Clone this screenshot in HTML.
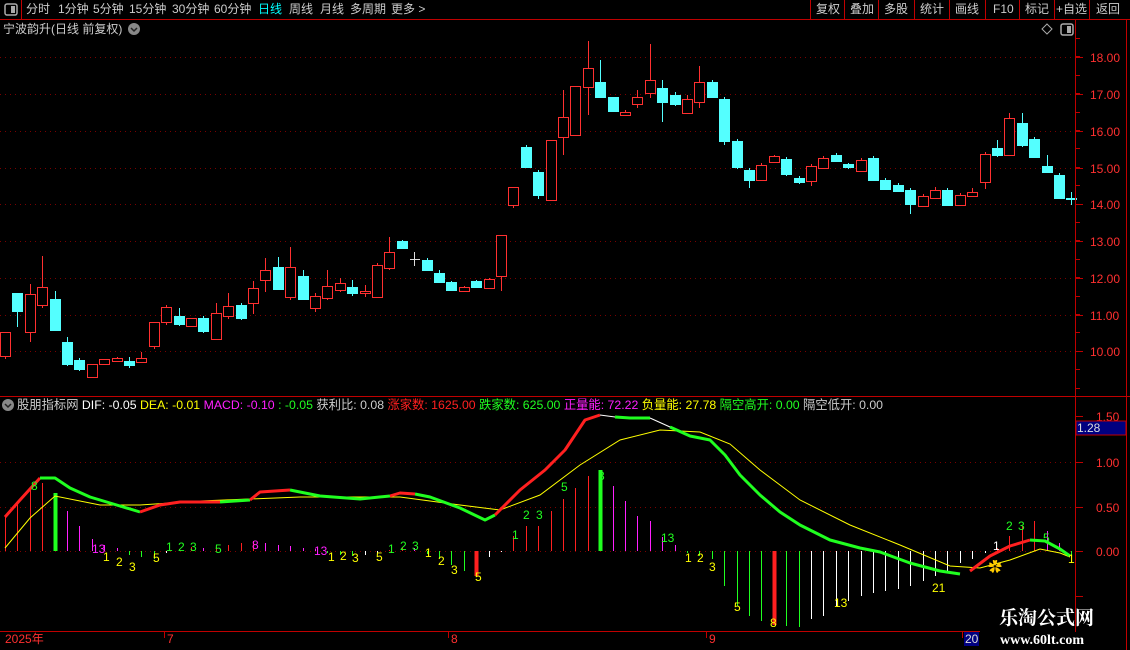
<!DOCTYPE html>
<html><head><meta charset="utf-8">
<style>
html,body{margin:0;padding:0;background:#000;width:1130px;height:650px;overflow:hidden}
body{font-family:"Liberation Sans","Noto Sans CJK SC",sans-serif;font-size:12px;color:#ccc;position:relative}
.t{position:absolute;white-space:nowrap;line-height:14px}
svg{position:absolute;left:0;top:0}
</style></head><body>
<svg id="s" width="1130" height="650" xmlns="http://www.w3.org/2000/svg" font-family="Liberation Sans, Noto Sans CJK SC, sans-serif" font-size="12">
<g id="grid"></g>
<g id="cd"></g>
<g id="hist"></g>
<polyline fill="none" stroke="#ffff00" stroke-width="1" points="5,548 30,518 55,496 100,505 140,505 200,501 300,497 400,497 460,505 500,510 540,495 580,465 620,440 660,430 700,432 730,444 760,470 800,500 850,525 900,545 950,566 980,568 1010,560 1040,549 1060,553 1070,557"/>
<g fill="none" stroke-width="3" stroke-linejoin="round">
<polyline stroke="#ff2020" points="5,517 20,500 40,478"/>
<polyline stroke="#20ff20" points="40,478 55,478 70,488 90,497 110,503 140,512"/>
<polyline stroke="#ff2020" points="140,512 160,505 180,502 220,502"/>
<polyline stroke="#20ff20" points="220,502 250,500"/>
<polyline stroke="#ff2020" points="250,500 260,492 290,490"/>
<polyline stroke="#20ff20" points="290,490 320,496 360,499 390,496"/>
<polyline stroke="#ff2020" points="390,496 400,493 415,494"/>
<polyline stroke="#20ff20" points="415,494 430,497 460,508 485,520 495,515"/>
<polyline stroke="#ff2020" points="495,515 500,510 520,490 545,470 565,450 585,420 600,415"/>
<polyline stroke="#20ff20" points="615,417 630,418 650,418"/>
<polyline stroke="#20ff20" points="670,427 690,436 710,440 725,455 740,475 760,495 780,512 800,525 830,540 860,548 880,552 910,563 940,571 960,574"/>
<polyline stroke="#ff2020" points="970,571 990,556 1010,546 1030,540"/>
<polyline stroke="#20ff20" points="1030,540 1045,541 1060,549 1070,556"/>
</g>
<polyline fill="none" stroke="#fff" stroke-width="1" points="600,415 615,417"/>
<polyline fill="none" stroke="#fff" stroke-width="1" points="650,418 670,427"/>
<g font-size="12">
<text x="31" y="490" fill="#20ff20">8</text>
<text x="92" y="553" fill="#ff20ff">13</text>
<text x="103" y="561" fill="#ffff00">1</text>
<text x="116" y="566" fill="#ffff00">2</text>
<text x="129" y="571" fill="#ffff00">3</text>
<text x="153" y="562" fill="#ffff00">5</text>
<text x="166" y="551" fill="#20ff20">1</text>
<text x="178" y="551" fill="#20ff20">2</text>
<text x="190" y="551" fill="#20ff20">3</text>
<text x="215" y="553" fill="#20ff20">5</text>
<text x="252" y="549" fill="#ff20ff">8</text>
<text x="314" y="555" fill="#ff20ff">13</text>
<text x="328" y="561" fill="#ffff00">1</text>
<text x="340" y="560" fill="#ffff00">2</text>
<text x="352" y="562" fill="#ffff00">3</text>
<text x="376" y="561" fill="#ffff00">5</text>
<text x="388" y="553" fill="#20ff20">1</text>
<text x="400" y="550" fill="#20ff20">2</text>
<text x="412" y="550" fill="#20ff20">3</text>
<text x="425" y="557" fill="#ffff00">1</text>
<text x="438" y="565" fill="#ffff00">2</text>
<text x="451" y="574" fill="#ffff00">3</text>
<text x="475" y="581" fill="#ffff00">5</text>
<text x="512" y="539" fill="#20ff20">1</text>
<text x="523" y="519" fill="#20ff20">2</text>
<text x="536" y="519" fill="#20ff20">3</text>
<text x="561" y="491" fill="#20ff20">5</text>
<text x="598" y="480" fill="#20ff20">8</text>
<text x="661" y="542" fill="#20ff20">13</text>
<text x="685" y="562" fill="#ffff00">1</text>
<text x="697" y="562" fill="#ffff00">2</text>
<text x="709" y="571" fill="#ffff00">3</text>
<text x="734" y="611" fill="#ffff00">5</text>
<text x="770" y="627" fill="#ffff00">8</text>
<text x="834" y="607" fill="#ffff00">13</text>
<text x="932" y="592" fill="#ffff00">21</text>
<text x="993" y="550" fill="#fff">1</text>
<text x="1006" y="530" fill="#20ff20">2</text>
<text x="1018" y="530" fill="#20ff20">3</text>
<text x="1043" y="542" fill="#20ff20">5</text>
<text x="1068" y="563" fill="#ffff00">1</text>
</g>
<text x="988" y="572" fill="#ffcc00" font-size="14">✿</text>
<g stroke="#c00000" stroke-width="1" fill="none">
<line x1="0" y1="19.5" x2="1130" y2="19.5"/>
<line x1="0" y1="396.5" x2="1130" y2="396.5"/>
<line x1="0" y1="631.5" x2="980" y2="631.5"/>
<line x1="1075.5" y1="19" x2="1075.5" y2="632"/>
<line x1="1126.5" y1="19" x2="1126.5" y2="650"/>
<line x1="21.5" y1="0" x2="21.5" y2="19"/>
</g>
<g id="ticks" stroke="#c00000"></g>
<g fill="#ff3030" font-size="12">
<text x="1090" y="62">18.00</text><text x="1090" y="99">17.00</text><text x="1090" y="136">16.00</text><text x="1090" y="173">15.00</text><text x="1090" y="209">14.00</text><text x="1090" y="246">13.00</text><text x="1090" y="283">12.00</text><text x="1090" y="320">11.00</text><text x="1090" y="356">10.00</text>
<text x="1096" y="421">1.50</text><text x="1096" y="467">1.00</text><text x="1096" y="512">0.50</text><text x="1096" y="556">0.00</text>
</g>
<rect x="1076" y="421" width="50" height="14" fill="#000080" stroke="#c00000"/>
<text x="1077" y="432" fill="#ddd">1.28</text>
<rect x="964" y="632" width="15" height="14" fill="#000080"/>
<text x="965" y="643" fill="#ddd">20</text>
<g fill="#ff3030"><text x="5" y="643">2025年</text><text x="167" y="643">7</text><text x="451" y="643">8</text><text x="709" y="643">9</text></g>
<g stroke="#c00000"><line x1="164.5" y1="632" x2="164.5" y2="638"/><line x1="448.5" y1="632" x2="448.5" y2="638"/><line x1="706.5" y1="632" x2="706.5" y2="638"/><line x1="962.5" y1="632" x2="962.5" y2="638"/></g>
<rect x="5" y="4" width="12" height="11" rx="2" fill="none" stroke="#aaa" stroke-width="1.5"/><rect x="11" y="6" width="4" height="7" fill="#aaa"/>
<rect x="1061" y="24" width="12" height="11" rx="2" fill="none" stroke="#aaa" stroke-width="1.5"/><rect x="1067" y="26" width="4" height="7" fill="#aaa"/>
<path d="M1047 24 L1052 29 L1047 34 L1042 29 Z" fill="none" stroke="#aaa"/>
<circle cx="134" cy="29" r="6" fill="#888"/><path d="M131 28 L134 31 L137 28" stroke="#222" stroke-width="1.5" fill="none"/>
<circle cx="8" cy="405" r="6" fill="#888"/><path d="M5 404 L8 407 L11 404" stroke="#222" stroke-width="1.5" fill="none"/>
<g stroke="#c00000"><line x1="810.5" y1="0" x2="810.5" y2="19"/><line x1="844.5" y1="0" x2="844.5" y2="19"/><line x1="878.5" y1="0" x2="878.5" y2="19"/><line x1="914.5" y1="0" x2="914.5" y2="19"/><line x1="949.5" y1="0" x2="949.5" y2="19"/><line x1="985.5" y1="0" x2="985.5" y2="19"/><line x1="1019.5" y1="0" x2="1019.5" y2="19"/><line x1="1054.5" y1="0" x2="1054.5" y2="19"/><line x1="1089.5" y1="0" x2="1089.5" y2="19"/></g>
</svg>
<div class="t" style="left:26px;top:2px">分时</div>
<div class="t" style="left:58px;top:2px">1分钟</div>
<div class="t" style="left:93px;top:2px">5分钟</div>
<div class="t" style="left:129px;top:2px">15分钟</div>
<div class="t" style="left:172px;top:2px">30分钟</div>
<div class="t" style="left:214px;top:2px">60分钟</div>
<div class="t" style="left:258px;top:2px;color:#00ffff">日线</div>
<div class="t" style="left:289px;top:2px">周线</div>
<div class="t" style="left:320px;top:2px">月线</div>
<div class="t" style="left:350px;top:2px">多周期</div>
<div class="t" style="left:391px;top:2px">更多 &gt;</div>
<div class="t" style="left:816px;top:2px">复权</div>
<div class="t" style="left:850px;top:2px">叠加</div>
<div class="t" style="left:884px;top:2px">多股</div>
<div class="t" style="left:920px;top:2px">统计</div>
<div class="t" style="left:955px;top:2px">画线</div>
<div class="t" style="left:993px;top:2px">F10</div>
<div class="t" style="left:1025px;top:2px">标记</div>
<div class="t" style="left:1056px;top:2px">+自选</div>
<div class="t" style="left:1096px;top:2px">返回</div>
<div class="t" style="left:3px;top:22px">宁波韵升(日线 前复权)</div>
<div class="t" style="left:17px;top:398px;font-size:12.3px">股朋指标网 <span style="color:#fff">DIF: -0.05</span> <span style="color:#ffff00">DEA: -0.01</span> <span style="color:#ff20ff">MACD: -0.10</span> <span style="color:#20ff20">: -0.05</span> 获利比: 0.08 <span style="color:#ff2020">涨家数: 1625.00</span> <span style="color:#20ff20">跌家数: 625.00</span> <span style="color:#ff20ff">正量能: 72.22</span> <span style="color:#ffff00">负量能: 27.78</span> <span style="color:#20ff20">隔空高开: 0.00</span> 隔空低开: 0.00</div>
<div class="t" style="left:999px;top:608px;font-family:'Liberation Serif','Noto Serif CJK SC',serif;font-weight:bold;font-size:19px;line-height:22px;color:#fff">乐淘公式网</div>
<div class="t" style="left:1000px;top:633px;font-family:'Liberation Serif',serif;font-weight:bold;font-size:14px;line-height:16px;color:#fff">www.60lt.com</div>
<script>
var NS="http://www.w3.org/2000/svg";
function el(p,t,a){var e=document.createElementNS(NS,t);for(var k in a)e.setAttribute(k,a[k]);p.appendChild(e);return e;}
var g=document.getElementById('grid');
[57,94,131,168,204,241,278,315,351,462,507,551].forEach(function(y){el(g,'line',{x1:0,y1:y+.5,x2:1075,y2:y+.5,stroke:'#7a0000','stroke-dasharray':'1,4'});});
var tk=document.getElementById('ticks');
for(var y=38;y<396;y+=18.4){el(tk,'line',{x1:1075,y1:Math.round(y)+.5,x2:1080,y2:Math.round(y)+.5});}
[57,94,131,168,204,241,278,315,351].forEach(function(y){el(tk,'line',{x1:1075,y1:y+.5,x2:1083,y2:y+.5});});
[416,462,507,551,596].forEach(function(y){el(tk,'line',{x1:1075,y1:y+.5,x2:1083,y2:y+.5});});
var C=[[332,356,332,359,1],[293,311,293,327,0],[294,332,284,342,1],[287,305,256,308,1],[299,330,291,330,0],[342,364,337,366,0],[360,369,358,371,0],[364,377,364,377,1],[359,364,359,364,1],[358,361,357,362,1],[361,365,357,368,0],[358,362,352,363,1],[322,346,322,349,1],[307,322,305,325,1],[316,324,308,326,0],[318,326,318,326,1],[318,331,316,333,0],[313,339,303,339,1],[306,316,293,319,1],[305,318,303,320,0],[288,303,281,314,1],[270,280,258,292,1],[267,289,257,290,0],[267,297,247,300,1],[276,299,270,299,0],[296,308,293,312,1],[286,298,270,300,1],[283,290,278,292,1],[287,293,280,296,0],[291,293,285,297,1],[265,297,263,297,1],[252,268,237,270,1],[241,248,240,248,0],[259,260,252,266,2],[260,270,258,270,0],[273,282,270,283,0],[282,290,281,291,0],[287,291,286,292,1],[281,287,280,288,0],[279,288,278,289,1],[235,276,235,291,1],[187,205,187,208,1],[147,167,145,167,0],[172,195,170,199,0],[140,200,140,200,1],[117,137,90,155,1],[86,135,86,135,1],[68,87,41,115,1],[82,97,60,98,0],[97,111,97,112,0],[112,115,110,116,1],[97,104,90,108,1],[80,93,44,98,1],[88,102,80,122,0],[95,104,92,106,0],[99,113,95,114,1],[82,102,66,108,1],[82,97,80,98,0],[99,141,97,145,0],[141,167,139,169,0],[170,180,168,188,0],[165,180,163,181,1],[156,162,155,163,1],[159,174,157,176,0],[178,182,176,184,0],[166,181,164,186,1],[158,168,156,169,1],[155,161,153,162,0],[164,167,163,169,0],[160,171,158,172,1],[158,180,156,181,0],[180,189,178,190,0],[185,191,183,192,0],[190,204,188,214,0],[196,206,194,207,1],[190,198,187,199,1],[190,205,188,206,0],[195,205,193,206,1],[192,196,188,197,1],[154,182,152,189,1],[148,155,140,157,0],[118,155,113,156,1],[123,145,113,147,0],[139,157,137,158,0],[166,172,155,173,0],[175,198,173,199,0],[198,199,192,205,0]];
var cd=document.getElementById('cd');
C.forEach(function(c,i){var x=Math.round(5+12.4*i);var col=c[4]==1?'#ff3030':(c[4]==2?'#ddd':'#54ffff');
el(cd,'line',{x1:x+.5,y1:c[2],x2:x+.5,y2:c[3],stroke:col});
var h=Math.max(1,c[1]-c[0]);
if(c[4]==1){el(cd,'rect',{x:x-4.5,y:c[0]+.5,width:10,height:h,fill:'#000',stroke:col});}
else if(c[4]==0){el(cd,'rect',{x:x-5,y:c[0],width:11,height:h+1,fill:col});}
else{el(cd,'line',{x1:x-4,y1:c[0]+.5,x2:x+6,y2:c[0]+.5,stroke:col});}
});
var H=[35,48,62,68,58,40,25,12,6,3,-4,-6,-8,-2,2,4,3,4,6,8,10,8,6,5,3,2,-2,-4,-5,-4,-2,1,4,3,-3,-8,-14,-20,-25,-6,-1,15,25,25,40,52,63,75,81,65,50,35,30,14,6,-2,-5,-8,-35,-55,-65,-70,-74,-75,-76,-68,-65,-55,-50,-45,-42,-40,-38,-35,-30,-25,-20,-12,-8,-2,3,15,25,30,20,8,-4];
var thick={4:'#20ff20',48:'#20ff20',62:'#ff2020',38:'#ff2020'};
var hg=document.getElementById('hist');
H.forEach(function(v,i){var x=Math.round(5+12.4*i)+.5;var p=i?H[i-1]:0;var col;
if(v>=0)col=v>=p?'#ff2020':'#ff20ff';else col=v<=p?'#20ff20':'#fff';
var w=1;if(thick[i]){col=thick[i];w=4;}
el(hg,'line',{x1:x,y1:551,x2:x,y2:551-v,stroke:col,'stroke-width':w});});
</script>
</body></html>
